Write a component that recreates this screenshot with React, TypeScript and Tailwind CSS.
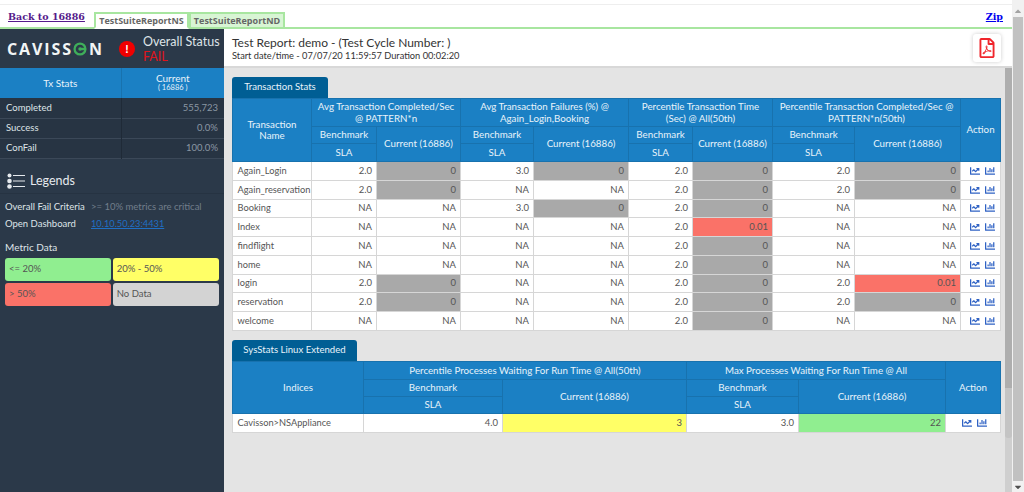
import React from 'react';
import { FaChartLine, FaChartBar, FaRegFilePdf, FaCaretUp, FaCaretDown } from 'react-icons/fa';

type Cell = string | [string, string];

const GREY = 'bg-[#a9a9a9]';
const RED = 'bg-[#fa7268]';
const YELLOW = 'bg-[#ffff66]';
const GREEN = 'bg-[#90ee90]';

const txRows: { name: string; cells: Cell[] }[] = [
  { name: 'Again_Login', cells: ['2.0', ['0', GREY], '3.0', ['0', GREY], '2.0', ['0', GREY], '2.0', ['0', GREY]] },
  { name: 'Again_reservation', cells: ['2.0', ['0', GREY], 'NA', 'NA', '2.0', ['0', GREY], '2.0', ['0', GREY]] },
  { name: 'Booking', cells: ['NA', 'NA', '3.0', ['0', GREY], '2.0', ['0', GREY], 'NA', 'NA'] },
  { name: 'Index', cells: ['NA', 'NA', 'NA', 'NA', '2.0', ['0.01', RED], 'NA', 'NA'] },
  { name: 'findflight', cells: ['NA', 'NA', 'NA', 'NA', '2.0', ['0', GREY], 'NA', 'NA'] },
  { name: 'home', cells: ['NA', 'NA', 'NA', 'NA', '2.0', ['0', GREY], 'NA', 'NA'] },
  { name: 'login', cells: ['2.0', ['0', GREY], 'NA', 'NA', '2.0', ['0', GREY], '2.0', ['0.01', RED]] },
  { name: 'reservation', cells: ['2.0', ['0', GREY], 'NA', 'NA', '2.0', ['0', GREY], '2.0', ['0', GREY]] },
  { name: 'welcome', cells: ['NA', 'NA', 'NA', 'NA', '2.0', ['0', GREY], 'NA', 'NA'] },
];

const th = 'border border-[#1872ae] bg-[#1b80c4] font-normal text-[#e8f3fa] text-[9.75px] text-center px-1 leading-[11.5px]';

function Actions() {
  return (
    <td className="border border-[#d6d6d6] bg-white">
      <div className="flex items-center justify-center gap-[5px] pl-[3px] text-[#2f62c4] text-[10px]">
        <FaChartLine />
        <FaChartBar />
      </div>
    </td>
  );
}

function ValueCell({ cell }: { cell: Cell }) {
  const text = typeof cell === 'string' ? cell : cell[0];
  const bg = typeof cell === 'string' ? 'bg-white' : cell[1];
  return <td className={`border border-[#d6d6d6] text-right pr-1 ${bg}`}>{text}</td>;
}

function Tab({ label, width }: { label: string; width: string }) {
  return (
    <div className={`h-[21px] ${width} bg-[#005e94] text-[#e8f3fa] text-[9.6px] rounded-t-[3px] flex items-center justify-center`}>
      {label}
    </div>
  );
}

function TransactionTable() {
  const groups = [
    ['Avg Transaction Completed/Sec', '@ PATTERN*n'],
    ['Avg Transaction Failures (%) @', 'Again_Login,Booking'],
    ['Percentile Transaction Time', '(Sec) @ All(50th)'],
    ['Percentile Transaction Completed/Sec @', 'PATTERN*n(50th)'],
  ];
  return (
    <table className="table-fixed border-collapse w-[768px] text-[9.5px] text-[#555]">
      <colgroup>
        <col className="w-[79px]" />
        <col className="w-[65px]" />
        <col className="w-[84px]" />
        <col className="w-[73px]" />
        <col className="w-[95px]" />
        <col className="w-[64px]" />
        <col className="w-[80px]" />
        <col className="w-[82px]" />
        <col className="w-[106px]" />
        <col className="w-[40px]" />
      </colgroup>
      <thead>
        <tr className="h-[28px]">
          <th rowSpan={3} className={th}>Transaction<br />Name</th>
          {groups.map((g) => (
            <th key={g[0]} colSpan={2} className={th}>{g[0]}<br />{g[1]}</th>
          ))}
          <th rowSpan={3} className={th}>Action</th>
        </tr>
        <tr className="h-[17px]">
          {groups.map((g) => (
            <React.Fragment key={g[0]}>
              <th className={th}>Benchmark</th>
              <th rowSpan={2} className={th}>Current (16886)</th>
            </React.Fragment>
          ))}
        </tr>
        <tr className="h-[18px]">
          {groups.map((g) => (
            <th key={g[0]} className={th}>SLA</th>
          ))}
        </tr>
      </thead>
      <tbody>
        {txRows.map((r) => (
          <tr key={r.name} className="h-[18.75px]">
            <td className="border border-[#d6d6d6] bg-white pl-[4.5px] text-[9.25px] whitespace-nowrap overflow-hidden">{r.name}</td>
            {r.cells.map((c, i) => (
              <ValueCell key={i} cell={c} />
            ))}
            <Actions />
          </tr>
        ))}
      </tbody>
    </table>
  );
}

function SysStatsTable() {
  return (
    <table className="table-fixed border-collapse w-[768px] text-[9.5px] text-[#555]">
      <colgroup>
        <col className="w-[131px]" />
        <col className="w-[139px]" />
        <col className="w-[184px]" />
        <col className="w-[112px]" />
        <col className="w-[147px]" />
        <col className="w-[55px]" />
      </colgroup>
      <thead>
        <tr className="h-[18px]">
          <th rowSpan={3} className={th}>Indices</th>
          <th colSpan={2} className={th}>Percentile Processes Waiting For Run Time @ All(50th)</th>
          <th colSpan={2} className={th}>Max Processes Waiting For Run Time @ All</th>
          <th rowSpan={3} className={th}>Action</th>
        </tr>
        <tr className="h-[17px]">
          <th className={th}>Benchmark</th>
          <th rowSpan={2} className={th}>Current (16886)</th>
          <th className={th}>Benchmark</th>
          <th rowSpan={2} className={th}>Current (16886)</th>
        </tr>
        <tr className="h-[17px]">
          <th className={th}>SLA</th>
          <th className={th}>SLA</th>
        </tr>
      </thead>
      <tbody>
        <tr className="h-[19px]">
          <td className="border border-[#d6d6d6] bg-white pl-[4.5px] text-[9.25px]">Cavisson&gt;NSAppliance</td>
          <ValueCell cell="4.0" />
          <ValueCell cell={['3', YELLOW]} />
          <ValueCell cell="3.0" />
          <ValueCell cell={['22', GREEN]} />
          <Actions />
        </tr>
      </tbody>
    </table>
  );
}

function Sidebar() {
  const stats = [
    ['Completed', '555,723'],
    ['Success', '0.0%'],
    ['ConFail', '100.0%'],
  ];
  return (
    <aside className="w-[224px] shrink-0 bg-[#2b3949] text-white flex flex-col">
      <div className="h-[39px] flex items-center pl-[7px]">
        <div className="flex items-center w-[112px] text-[16px] font-bold tracking-[1.9px] text-[#f2f5f5] font-['Open_Sans',sans-serif]">
          CAVISS
          <svg viewBox="0 0 16 16" className="w-[14px] h-[14px] mr-[2px]">
            <circle cx="8" cy="8" r="6.2" fill="none" stroke="#3fae5a" strokeWidth="2.6" />
            <circle cx="8" cy="8" r="2" fill="#3fae5a" />
            <path d="M8 6.6h6v2.8H8z" fill="#3fae5a" />
          </svg>
          N
        </div>
        <span className="w-[16px] h-[16px] rounded-full bg-[#f00000] text-white text-[12px] font-bold flex items-center justify-center mr-[8px]">!</span>
        <div className="text-[12.5px] leading-[15px] text-[#dfe4e8]">
          Overall Status
          <div className="text-[#e0141c]">FAIL</div>
        </div>
      </div>
      <table className="table-fixed border-collapse w-[224px] text-[9.5px]">
        <colgroup>
          <col className="w-[121px]" />
          <col className="w-[103px]" />
        </colgroup>
        <thead>
          <tr className="h-[30px] bg-[#1b80c4] text-[#e8f3fa]">
            <th className="font-normal text-[10px] border-r border-[#1872ae]">Tx Stats</th>
            <th className="font-normal text-[10px] leading-[10px]">
              Current
              <div className="text-[7.5px]">( 16886 )</div>
            </th>
          </tr>
        </thead>
        <tbody>
          {stats.map(([k, v]) => (
            <tr key={k} className="h-[20px] bg-[#273443] border-b border-[#3b4858]">
              <td className="pl-[6px] text-[#dfe4e8] border-r border-[#1f2a37]">{k}</td>
              <td className="pr-[6px] text-right text-[#8b97a4]">{v}</td>
            </tr>
          ))}
        </tbody>
      </table>
      <div className="mt-[11px] h-[24px] flex items-center gap-[5px] pl-[7px] border-b border-[#263342] text-[12.5px] text-[#e6eaee]">
        <svg viewBox="0 0 18 16" className="w-[18px] h-[16px]" fill="#e6eaee">
          <circle cx="2.5" cy="2.5" r="2" />
          <circle cx="2.5" cy="8" r="2.3" />
          <circle cx="2.5" cy="13.5" r="2.3" />
          <rect x="6" y="2" width="12" height="1" />
          <rect x="6" y="7.5" width="12" height="1" />
          <rect x="6" y="13" width="12" height="1" />
        </svg>
        Legends
      </div>
      <div className="px-[5px] pt-[5px] text-[9.5px] text-[#dfe4e8]">
        <div className="flex h-[17px] items-center">
          <span className="w-[86px]">Overall Fail Criteria</span>
          <span className="text-[#727e8b]">&gt;= 10% metrics are critical</span>
        </div>
        <div className="flex h-[17px] items-center">
          <span className="w-[86px]">Open Dashboard</span>
          <a className="text-[#1f6fc4] underline text-[9.25px]">10.10.50.23:4431</a>
        </div>
        <div className="mt-[7px] text-[10px]">Metric Data</div>
        <div className="mt-[3px] grid grid-cols-2 gap-x-[1.5px] gap-y-[2px] text-[9.5px] text-[#555]">
          <div className="h-[23px] rounded-[3px] bg-[#90ee90] flex items-center pl-1">&lt;= 20%</div>
          <div className="h-[23px] rounded-[3px] bg-[#ffff66] flex items-center pl-1">20% - 50%</div>
          <div className="h-[23px] rounded-[3px] bg-[#fa7268] flex items-center pl-1">&gt; 50%</div>
          <div className="h-[23px] rounded-[3px] bg-[#d3d3d3] flex items-center pl-1">No Data</div>
        </div>
      </div>
    </aside>
  );
}

export default function App() {
  return (
    <div className="h-[492px] w-[1024px] overflow-hidden flex bg-white font-['Lato',sans-serif]">
      <div className="w-[1012px] shrink-0 flex flex-col">
        <div className="h-[5px] border-b border-[#eeeeee]" />
        <div className="h-[24px] shrink-0 flex items-end justify-between border-b-2 border-[#a8e6a0] pr-[9px] font-['DejaVu_Serif',serif] text-[9.5px] font-bold">
          <div className="flex items-end">
            <a className="w-[94px] pl-[8px] pb-[3px] text-[#551a8b] underline text-[9.5px]">Back to 16886</a>
            <div className="w-[95px] h-[17px] -mb-[2px] border-2 border-[#a8e6a0] border-b-white bg-white text-[#666] text-[9px] font-['Open_Sans',sans-serif] flex items-center justify-center">TestSuiteReportNS</div>
            <div className="w-[96px] h-[17px] -mb-[2px] border-2 border-[#a8e6a0] bg-[#d8f5d4] text-[#666] text-[9px] font-['Open_Sans',sans-serif] flex items-center justify-center">TestSuiteReportND</div>
          </div>
          <a className="text-[#0000ee] underline pb-[3px]">Zip</a>
        </div>
        <div className="flex-1 flex min-h-0">
          <Sidebar />
          <main className="flex-1 min-w-0 flex flex-col bg-[#e4e4e4]">
            <div className="h-[39px] shrink-0 bg-white border-b-2 border-[#d8d8d8] flex items-center justify-between pl-[8px] pr-[11px]">
              <div className="text-[#333]">
                <div className="text-[12px] leading-[14px] pt-[2px]">Test Report: demo - (Test Cycle Number: )</div>
                <div className="text-[9.25px] leading-[12px]">Start date/time - 07/07/20 11:59:57 Duration 00:02:20</div>
              </div>
              <div className="w-[28px] h-[28px] rounded-[3px] bg-white shadow-[0_0_4px_rgba(0,0,0,0.2)] flex items-center justify-center text-[#f0252b] text-[20px]">
                <FaRegFilePdf />
              </div>
            </div>
            <div className="flex-1 min-h-0 flex">
              <div className="flex-1 pl-[8px] pt-[9px]">
                <Tab label="Transaction Stats" width="w-[96px]" />
                <TransactionTable />
                <div className="mt-[9px]">
                  <Tab label="SysStats Linux Extended" width="w-[125px]" />
                  <SysStatsTable />
                </div>
              </div>
              <div className="w-[7px] shrink-0 bg-[#cfcfcf] flex flex-col">
                <div className="h-[320px] bg-[#aeaeae]" />
                <div className="h-[50px] bg-[#c4c4c4] rounded-b-[3px]" />
              </div>
            </div>
          </main>
        </div>
      </div>
      <div className="flex-1 bg-[#f1f1f1] flex flex-col items-center text-[#505050] text-[10px]">
        <div className="h-[17px] pt-[5px] flex items-center justify-center text-[#a3a3a3]"><FaCaretUp /></div>
        <div className="flex-1 w-[10px] bg-[#c1c1c1]" />
        <div className="h-[11px] flex items-center justify-center"><FaCaretDown /></div>
      </div>
    </div>
  );
}
